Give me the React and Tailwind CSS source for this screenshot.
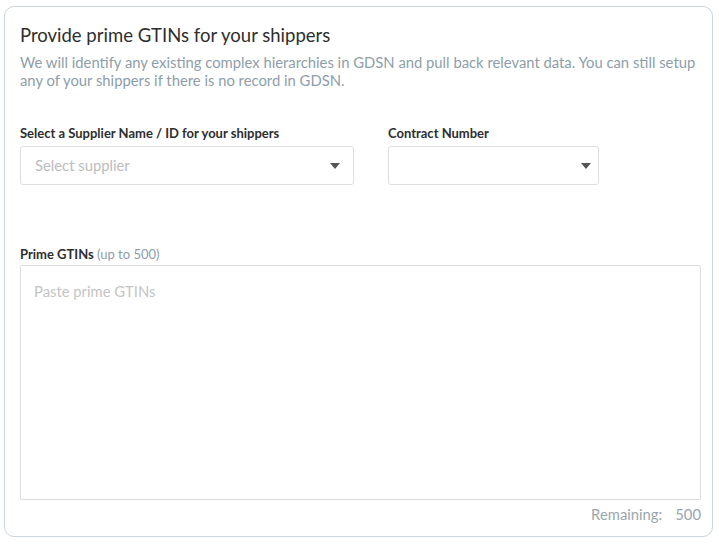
export default function App() {
  const font = { fontFamily: "Lato, 'Open Sans', sans-serif" };
  const Arrow = () => (
    <svg width="10" height="6" viewBox="0 0 10 6" className="shrink-0">
      <path d="M0 0 H10 L5 6 Z" fill="#555" />
    </svg>
  );
  return (
    <div className="w-[719px] h-[544px] bg-white pt-[6px] pl-[4px]" style={font}>
      <div className="w-[709px] h-[531px] border border-[#c9d5e0] rounded-[10px] pl-[15px] pr-[12px] pt-[16px] flex flex-col">
        <h1 className="text-[18.5px] leading-[24px] text-[#2e2e2e]">Provide prime GTINs for your shippers</h1>
        <p className="mt-[6px] text-[14.8px] leading-[18px] text-[#8d9ea9]">
          We will identify any existing complex hierarchies in GDSN and pull back relevant data. You can still setup any of your shippers if there is no record in GDSN.
        </p>
        <div className="mt-[36px] flex gap-[34px]">
          <div className="flex flex-col">
            <label className="text-[13px] leading-[16px] font-bold text-[#2e2e2e]">Select a Supplier Name / ID for your shippers</label>
            <div className="mt-[5px] w-[334px] h-[39px] border border-[#dcdfe2] rounded-[3px] flex items-center justify-between pl-[14px] pr-[13px]">
              <span className="text-[14.8px] text-[#bcbcbc]">Select supplier</span>
              <Arrow />
            </div>
          </div>
          <div className="flex flex-col">
            <label className="text-[13px] leading-[16px] font-bold text-[#2e2e2e]">Contract Number</label>
            <div className="mt-[5px] w-[211px] h-[39px] border border-[#dcdfe2] rounded-[3px] flex items-center justify-end pr-[7px]">
              <Arrow />
            </div>
          </div>
        </div>
        <div className="mt-[61px] text-[13px] leading-[16px]">
          <span className="font-bold text-[#2e2e2e]">Prime GTINs</span>{" "}
          <span className="text-[#8d9ea9]">(up to 500)</span>
        </div>
        <div className="mt-[3px] w-[681px] h-[235px] border border-[#dcdfe2] rounded-[2px] pl-[13px] pt-[13px]">
          <span className="text-[14.8px] text-[#c4c4c4]">Paste prime GTINs</span>
        </div>
        <div className="w-[681px] mt-[4px] flex justify-end text-[14.8px] leading-[20px] text-[#9aa6ae]">
          <span>Remaining:</span>
          <span className="ml-[13px]">500</span>
        </div>
      </div>
    </div>
  );
}
